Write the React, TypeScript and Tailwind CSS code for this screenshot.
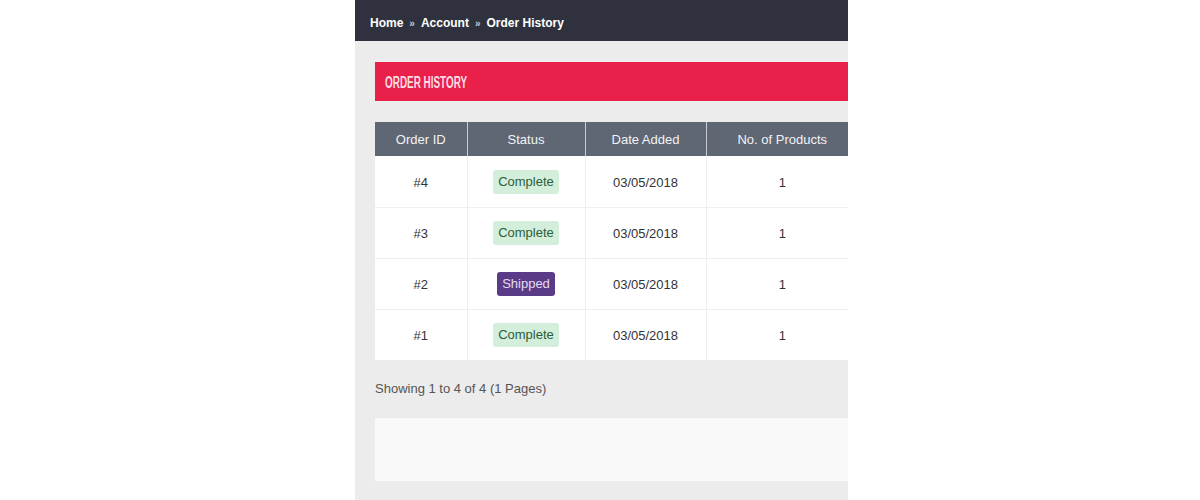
const ORDERS = [
  { id: 4, status: 'Complete', date: '03/05/2018', products: 1 },
  { id: 3, status: 'Complete', date: '03/05/2018', products: 1 },
  { id: 2, status: 'Shipped', date: '03/05/2018', products: 1 },
  { id: 1, status: 'Complete', date: '03/05/2018', products: 1 },
];

const StatusBadge = ({ status }: { status: string }) => {
  const shipped = status === 'Shipped';
  return (
    <span
      className={
        shipped
          ? 'inline-block rounded-[3px] bg-[#5a3b87] px-[5px] leading-[24px] text-[#e6dbf3]'
          : 'inline-block rounded-[3px] bg-[#d3eedb] px-[5px] leading-[24px] text-[#2c5e37]'
      }
    >
      {status}
    </span>
  );
};

export default function App() {
  return (
    <div className="flex h-[500px] w-[1200px] bg-white pl-[355px] font-['Liberation_Sans',Arial,sans-serif]">
      <div className="flex w-[493px] flex-col overflow-hidden bg-[#ececec]">
        <div className="flex h-[41px] shrink-0 items-center gap-[6px] bg-[#2f323e] pl-[15px] pt-[5px] text-[12px] font-bold text-white">
          <span>Home</span>
          <span className="text-[10px] text-[#c8c9cf]">»</span>
          <span>Account</span>
          <span className="text-[10px] text-[#c8c9cf]">»</span>
          <span>Order History</span>
        </div>

        <div className="pl-[20px] pt-[21px]">
          <div className="flex h-[39px] w-[500px] items-center bg-[#e8204a] pl-[10px] pt-[2px]">
            <h2 className="inline-block origin-left scale-x-[0.62] text-[16px] font-bold whitespace-nowrap text-[#fcdde4]">
              ORDER HISTORY
            </h2>
          </div>

          <table className="mt-[21px] w-[483px] table-fixed border-collapse text-center text-[13px]">
            <colgroup>
              <col className="w-[92px]" />
              <col className="w-[118px]" />
              <col className="w-[121px]" />
              <col className="w-[152px]" />
            </colgroup>
            <thead>
              <tr className="h-[34px] bg-[#5f6674] text-[#f2f3f5]">
                <th className="border-r border-[#c9ccd2] pt-[2px] font-normal">Order ID</th>
                <th className="border-r border-[#c9ccd2] pt-[2px] font-normal">Status</th>
                <th className="border-r border-[#c9ccd2] pt-[2px] font-normal">Date Added</th>
                <th className="pt-[2px] font-normal">No. of Products</th>
              </tr>
            </thead>
            <tbody className="bg-white text-[#333]">
              {ORDERS.map((order) => (
                <tr key={order.id} className="h-[51px] border-b border-[#eeeeee] last:border-b-0">
                  <td className="border-r border-[#eeeeee] pt-[2px]">#{order.id}</td>
                  <td className="border-r border-[#eeeeee] pt-[1px]">
                    <StatusBadge status={order.status} />
                  </td>
                  <td className="border-r border-[#eeeeee] pt-[2px]">{order.date}</td>
                  <td className="pt-[2px]">{order.products}</td>
                </tr>
              ))}
            </tbody>
          </table>

          <p className="mt-[19px] text-[13px] text-[#555]">Showing 1 to 4 of 4 (1 Pages)</p>

          <div className="mt-[19px] h-[63px] w-[500px] bg-[#f9f9f9]"></div>
        </div>
      </div>
    </div>
  );
}
